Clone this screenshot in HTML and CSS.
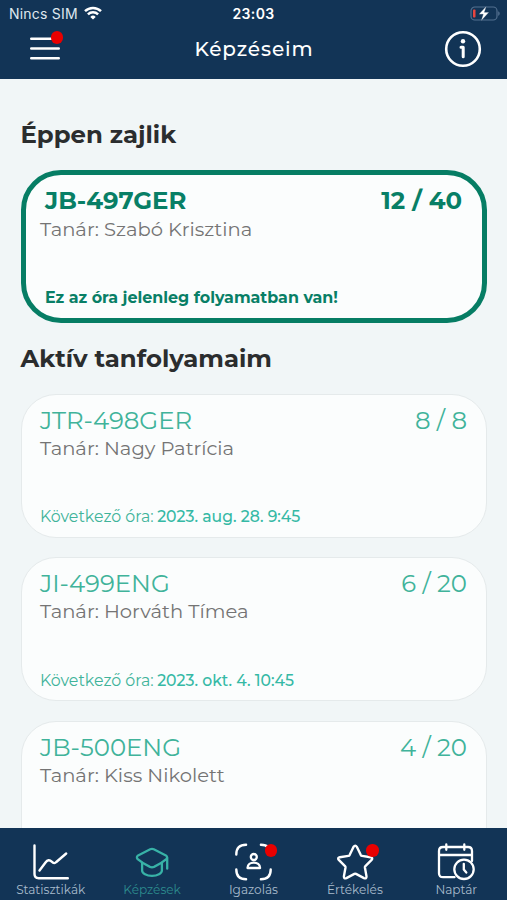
FILE: index.html
```html
<!DOCTYPE html>
<html lang="hu">
<head>
<meta charset="utf-8">
<title>Képzéseim</title>
<link rel="stylesheet" href="styles.css">
</head>
<body>
<header class="header">
  <div class="status">
    <div class="carrier">Nincs SIM
      <svg class="wifi" width="18" height="14" viewBox="0 0 18 14" fill="none" stroke="#fff" stroke-width="2.5"><path d="M1 5.2a11.6 11.6 0 0 1 16 0M3.9 8.3a7.4 7.4 0 0 1 10.2 0"/><path d="M9 13.6 6.3 10.9a3.9 3.9 0 0 1 5.4 0z" fill="#fff" stroke="none"/></svg>
    </div>
    <div class="clock">23:03</div>
    <svg class="battery" width="31" height="16" viewBox="0 0 31 16"><rect x="2" y="1" width="26" height="13" rx="3.8" fill="none" stroke="#53708f" stroke-width="1.2"/><path d="M29.2 5.2c2 .8 2 3.8 0 4.600z" fill="#53708f"/><rect x="4" y="3.5" width="2.5" height="8" rx=".8" fill="#e8453f"/><path d="M17.5 0 9.800 8.300h4.400L12 15l8-8.700h-4.600z" fill="#fff" stroke="#123456" stroke-width=".3"/></svg>
  </div>
  <div class="titlebar">
    <div class="iconbox menu">
      <svg width="30" height="25" viewBox="0 0 30 25" stroke="#fff" stroke-width="2.4" stroke-linecap="round"><path d="M1.2 2.7h27.6M1.2 12.5h27.6M1.2 22.3h27.6"/></svg>
      <span class="dot"></span>
    </div>
    <h1 class="title">Képzéseim</h1>
    <svg class="info" width="38" height="38" viewBox="0 0 38 38" fill="none" stroke="#fff"><circle cx="19" cy="19" r="16.8" stroke-width="2.6"/><circle cx="19" cy="11.2" r="2.2" fill="#fff" stroke="none"/><path d="M17 17.2h2.200v9.600" stroke-width="3" stroke-linecap="round" stroke-linejoin="round"/></svg>
  </div>
</header>
<main class="content">
  <h2 class="section">Éppen zajlik</h2>
  <article class="card live">
    <div class="row"><span class="name">JB-497GER</span><span class="count">12 / 40</span></div>
    <p class="teacher">Tanár: Szabó Krisztina</p>
    <p class="next">Ez az óra jelenleg folyamatban van!</p>
  </article>
  <h2 class="section">Aktív tanfolyamaim</h2>
  <div class="list">
    <article class="card">
      <div class="row"><span class="name">JTR-498GER</span><span class="count">8 / 8</span></div>
      <p class="teacher">Tanár: Nagy Patrícia</p>
      <p class="next"><span>Következő óra:</span><span class="date">2023. aug. 28. 9:45</span></p>
    </article>
    <article class="card">
      <div class="row"><span class="name">JI-499ENG</span><span class="count">6 / 20</span></div>
      <p class="teacher">Tanár: Horváth Tímea</p>
      <p class="next"><span>Következő óra:</span><span class="date">2023. okt. 4. 10:45</span></p>
    </article>
    <article class="card">
      <div class="row"><span class="name">JB-500ENG</span><span class="count">4 / 20</span></div>
      <p class="teacher">Tanár: Kiss Nikolett</p>
    </article>
  </div>
</main>
<nav class="tabs">
  <div class="tab">
    <div class="iconbox"><svg width="38" height="38" viewBox="0 0 38 38" fill="none" stroke="#fff" stroke-width="2.4" stroke-linecap="round" stroke-linejoin="round"><path d="M2.500 2.500v28.500q0 4.200 4.200 4.200H35.800"/><path d="M7.500 27.500 13.500 19.500q3-4 6.200-.8 2.600 2.600 4.600.3L34.200 10.500"/></svg></div>
    <span>Statisztikák</span>
  </div>
  <div class="tab active">
    <div class="iconbox"><svg width="38" height="38" viewBox="0 0 38 38" fill="none" stroke="#38b2a7" stroke-width="2.3" stroke-linecap="round" stroke-linejoin="round"><path d="M17.200 6.200 5.100 12.400q-2.200 1.500-.4 3.800 5.500 4.800 12.300 7.700 2 .8 4 0 6.800-2.900 12.300-7.700 1.800-2.300-.4-3.800L20.800 6.200q-1.800-.8-3.600 0z"/><path d="M9.100 20v7.500c0 2.800 4.400 5.400 9.900 5.400s9.900-2.600 9.900-5.400V20M34.200 15v10.700"/></svg></div>
    <span>Képzések</span>
  </div>
  <div class="tab">
    <div class="iconbox"><svg width="38" height="38" viewBox="0 0 38 38" fill="none" stroke="#fff" stroke-width="2.4" stroke-linecap="round"><path d="M2.300 11.500c0-6.500 3.300-9.800 9.800-9.800M26.900 1.700c6.500 0 9.800 3.300 9.800 9.800M2.300 26.500c0 6.500 3.300 9.800 9.800 9.800M26.900 36.300c6.500 0 9.800-3.300 9.800-9.800"/><circle cx="19.800" cy="14" r="3" stroke-width="2.300"/><path d="M13.500 25c0-7.200 12.600-7.200 12.600 0z" stroke-width="2.300" stroke-linejoin="round"/></svg><i class="dot"></i></div>
    <span>Igazolás</span>
  </div>
  <div class="tab">
    <div class="iconbox"><svg width="38" height="38" viewBox="0 0 38 38" fill="none" stroke="#fff" stroke-width="2.400" stroke-linejoin="round"><path d="M17.600 3.800q1.700-2.400 3.200 0l4 8.300q.4.700 1.200.8l8.600 1.300q2.700.7 1 2.700l-6.200 6.200q-.6.600-.5 1.400l1.600 8.900q.1 2.800-2.500 1.700l-8-4.200q-.8-.4-1.600 0l-8 4.200q-2.600 1.100-2.500-1.700l1.600-8.900q.1-.8-.5-1.400l-6.200-6.200q-1.700-2 1-2.700l8.600-1.300q.8-.1 1.200-.8z"/></svg><i class="dot"></i></div>
    <span>Értékelés</span>
  </div>
  <div class="tab">
    <div class="iconbox"><svg width="38" height="38" viewBox="0 0 38 38" fill="none" stroke="#fff" stroke-width="2.300" stroke-linecap="round" stroke-linejoin="round"><path d="M17.500 34.200H6q-4 0-4-4V8q0-4 4-4h25q4 0 4 4v10M2.200 12H35M9.300 1.500v5.300M27.300 1.500v5.300"/><circle cx="27" cy="26.300" r="9.700"/><path d="M26.800 20.800v5.700l2.500 3"/></svg></div>
    <span>Naptár</span>
  </div>
</nav>
</body>
</html>
```
FILE: styles.css
```css
* { box-sizing: border-box; }
body {
  margin: 0;
  height: 900px;
  overflow: hidden;
  display: flex;
  flex-direction: column;
  background: #f1f6f7;
  font-family: Montserrat, Inter, sans-serif;
}
h1, h2, p { margin: 0; }
svg { display: block; flex: none; }

.header {
  height: 79px;
  flex: none;
  background: #123456;
  color: #fff;
}
.status {
  height: 28px;
  padding: 0 7px 0 9px;
  display: grid;
  grid-template-columns: 1fr auto 1fr;
  align-items: start;
  font-family: Inter, sans-serif;
  font-size: 14px;
  line-height: 28px;
}
.carrier { display: flex; align-items: center; gap: 6px; letter-spacing: .2px; color: #dfe7ee; }
.wifi { margin-top: -2px; }
.clock { font-weight: 600; letter-spacing: .4px; margin-left: -2px; }
.battery { justify-self: end; margin-top: 6px; }
.titlebar {
  height: 41px;
  padding: 0 25px 0 30px;
  display: flex;
  align-items: center;
  justify-content: space-between;
}
.title { font-size: 20px; font-weight: 500; letter-spacing: .9px; line-height: 28px; padding-left: 4px; }

.iconbox { position: relative; }
.dot {
  position: absolute;
  top: 1px;
  right: -5px;
  width: 12.5px;
  height: 12.5px;
  border-radius: 50%;
  background: #e90000;
}
.menu .dot { top: -5px; right: -3px; }

.content { flex: 1; min-height: 0; overflow: hidden; padding: 40px 20px 0 20.5px; }
.section { font-size: 24.4px; font-weight: 700; line-height: 30px; color: #2b2d2e; }
.section + .card { margin: 21px 0 20px; }
.list { margin-top: 20.5px; display: flex; flex-direction: column; gap: 19.5px; }
.card {
  height: 144px;
  flex: none;
  display: flex;
  flex-direction: column;
  padding: 10px 19px 9.5px 18.5px;
  border: 1px solid #e5eaeb;
  border-radius: 35px;
  background: #fbfdfd;
  color: #40b39a;
}
.row { display: flex; justify-content: space-between; font-size: 24.4px; line-height: 30px; }
.teacher { font-size: 19.55px; line-height: 28px; color: #747474; }
.list .teacher { margin-top: -1px; }
.next { margin-top: auto; font-size: 15.8px; line-height: 20px; display: flex; gap: 3.5px; }
.date { font-weight: 500; font-size: 15.65px; color: #35b9a5; }

.live {
  height: 153px;
  padding: 10px 14px 10px 14.5px;
  border: 5px solid #067d64;
  border-radius: 40px;
  color: #087f66;
}
.live .row { font-weight: 700; padding: 0 6px 0 5px; }
.live .next { font-weight: 700; font-size: 15.9px; padding-left: 5px; }

.tabs {
  height: 72px;
  flex: none;
  display: grid;
  grid-template-columns: repeat(5, 1fr);
  background: #123456;
}
.tab {
  padding-top: 15px;
  display: flex;
  flex-direction: column;
  align-items: center;
  font-size: 12.1px;
  line-height: 17px;
  color: #a9bccd;
}
.tab.active { color: #2d8c8e; }
```
